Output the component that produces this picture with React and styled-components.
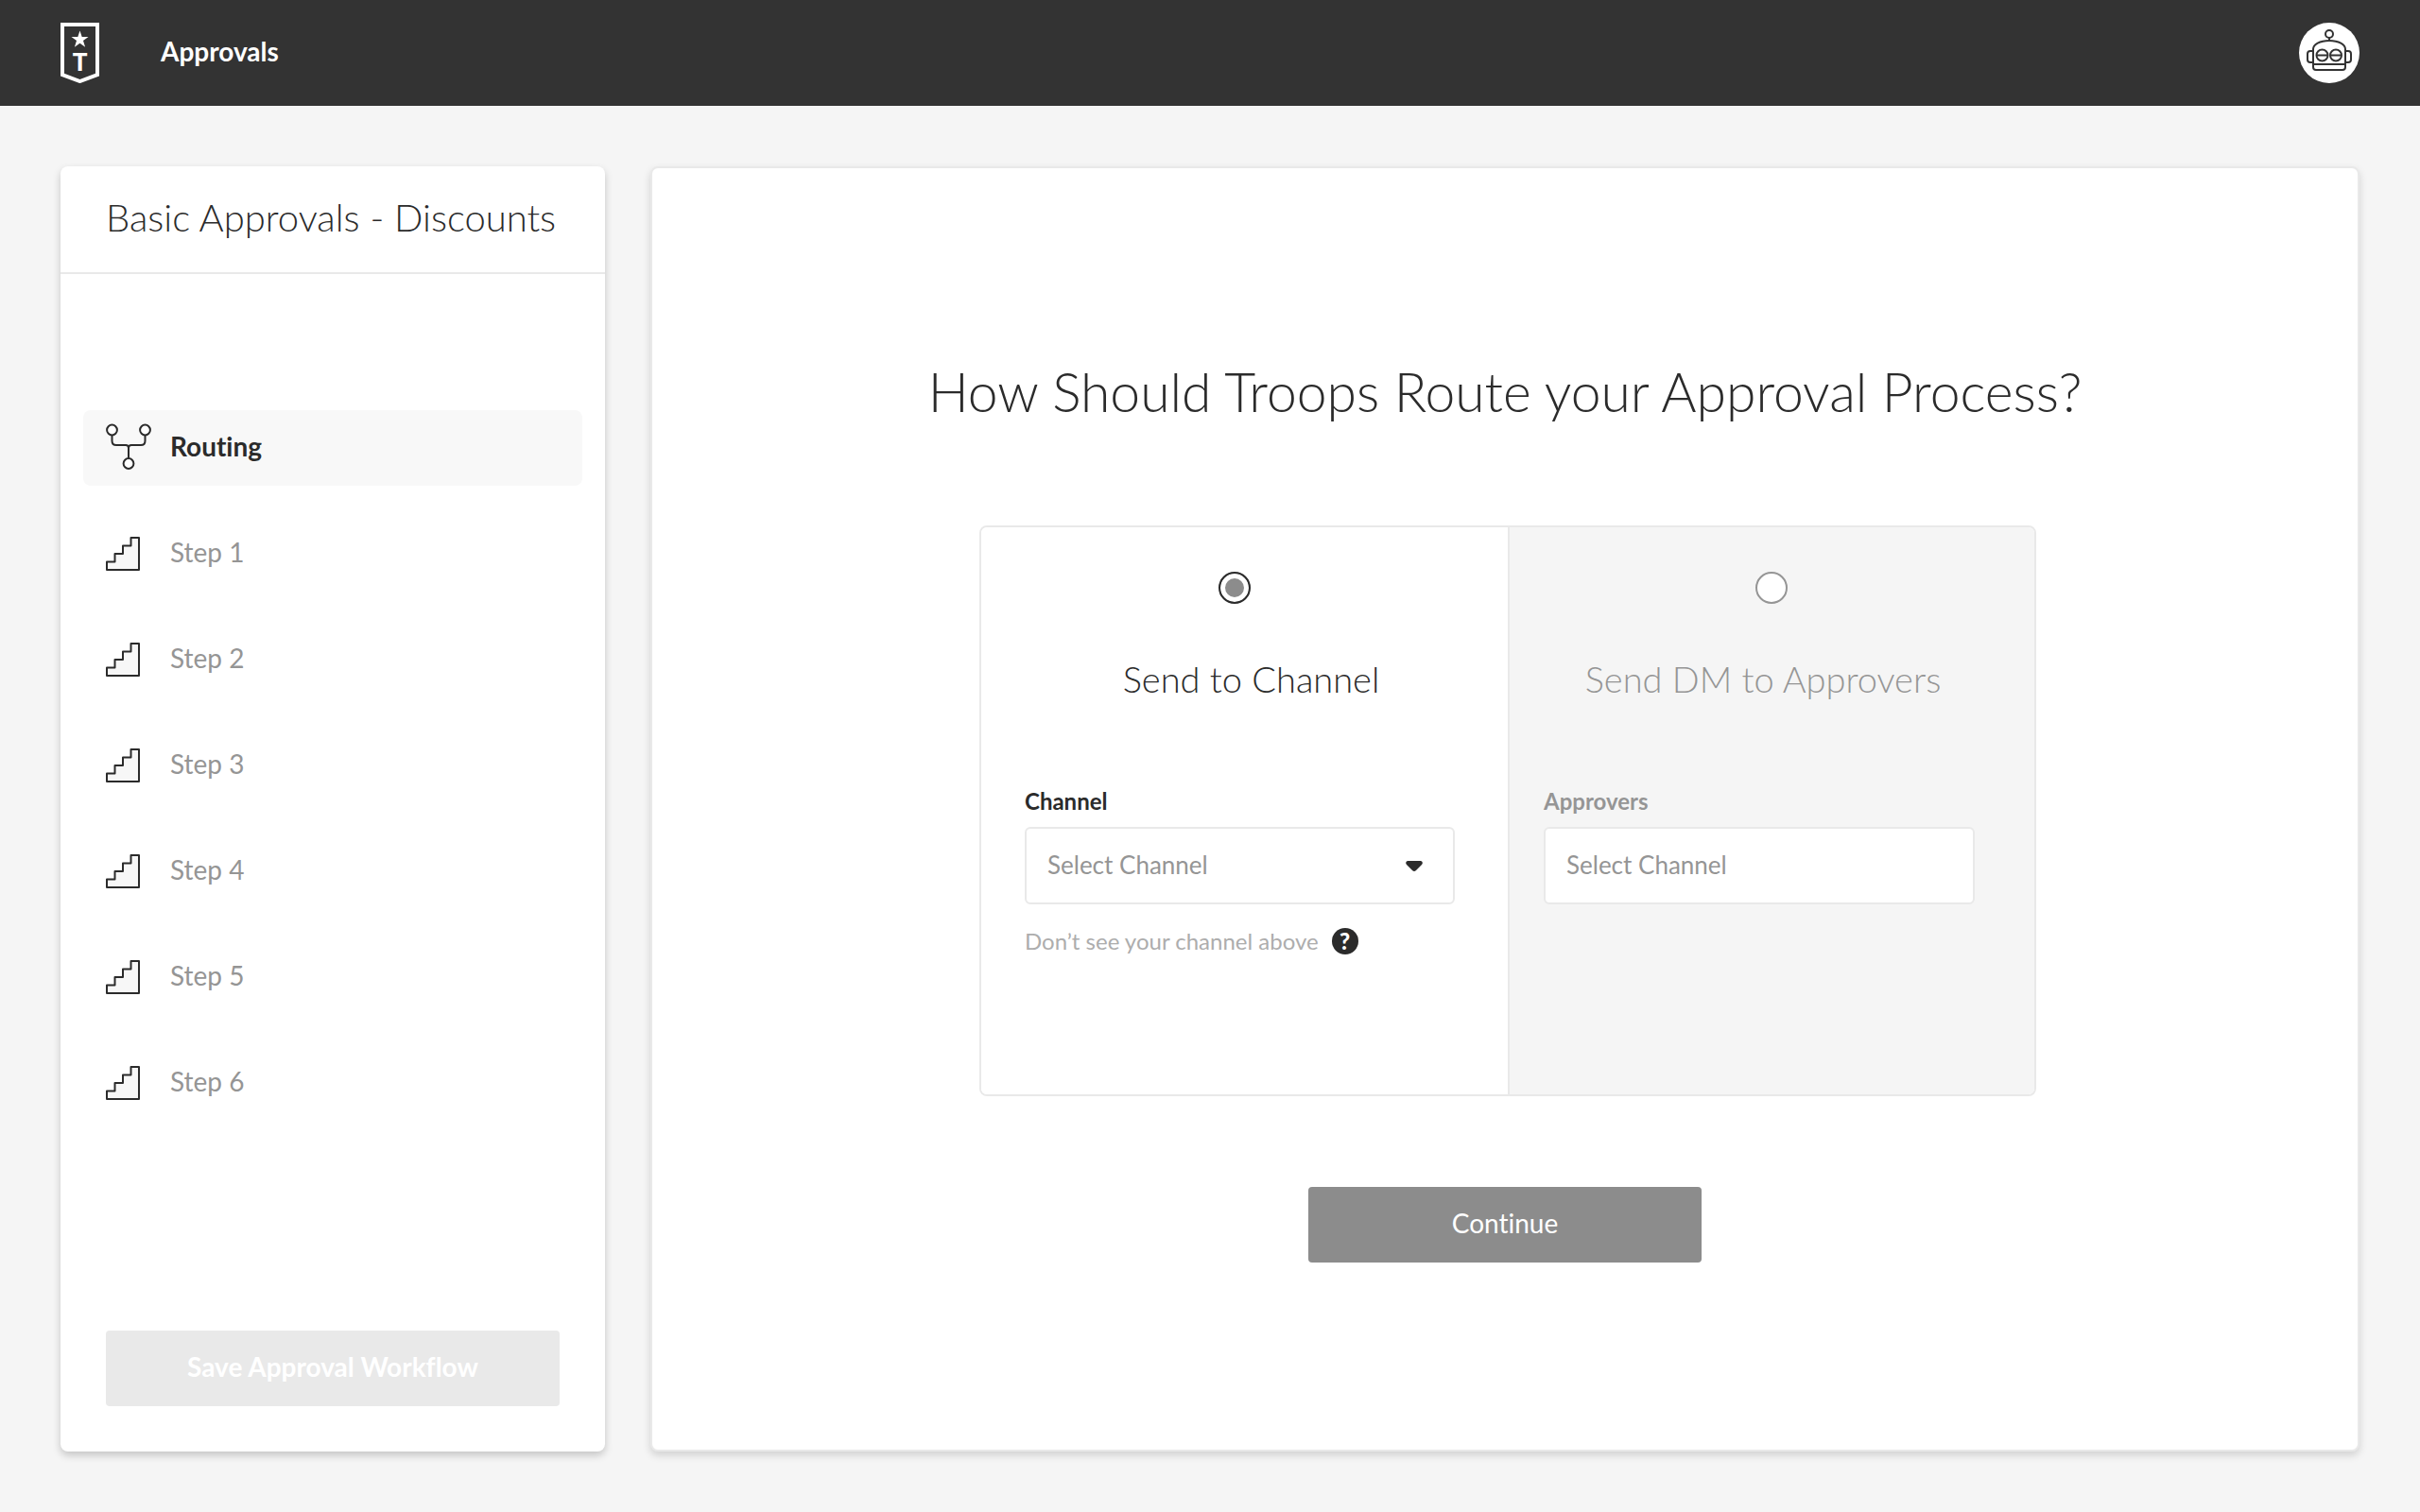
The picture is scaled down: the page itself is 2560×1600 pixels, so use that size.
import React, { useState } from "react";
import styled, { createGlobalStyle } from "styled-components";

const steps = ["Step 1", "Step 2", "Step 3", "Step 4", "Step 5", "Step 6"];

function LogoIcon() {
  return (
    <svg width="42" height="64" viewBox="0 0 42 64" fill="none">
      <path d="M2 2h37v53L20.500 62 2 55z" stroke="#fff" strokeWidth="4" />
      <path d="M20.500 8.500l2.200 6.500h6.800l-5.500 4.100 2.100 6.600-5.600-4-5.600 4 2.100-6.600-5.500-4.100h6.800z" fill="#fff" />
      <text x="20.500" y="51" textAnchor="middle" fontSize="26" fontWeight="900" fill="#fff">T</text>
    </svg>
  );
}

function RobotIcon() {
  return (
    <svg width="64" height="64" viewBox="0 0 64 64" fill="none" stroke="#333" strokeWidth="2">
      <circle cx="32" cy="12" r="4" />
      <path d="M32 16v4" />
      <path d="M15 47V28c0-5 7-9 17-9s17 4 17 9v19a3 3 0 0 1-3 3H18a3 3 0 0 1-3-3z" />
      <path d="M15 44h34" />
      <path d="M15 30h-3a3 3 0 0 0-3 3v6a3 3 0 0 0 3 3h3M49 30h3a3 3 0 0 1 3 3v6a3 3 0 0 1-3 3h-3" />
      <circle cx="24.500" cy="34.500" r="6" />
      <circle cx="39" cy="34.500" r="6" />
      <path d="M18.500 34.500h12M33 34.500h12" />
    </svg>
  );
}

function RoutingIcon() {
  return (
    <svg width="48" height="52" viewBox="0 0 48 52" fill="none" stroke="#2b2b2b" strokeWidth="2">
      <circle cx="6.500" cy="7" r="5.400" fill="#fff" />
      <circle cx="41.500" cy="7" r="5.400" fill="#fff" />
      <circle cx="24" cy="42.500" r="5.400" fill="#fff" />
      <path d="M6.500 12.500v6q0 4.500 4.500 4.500h10q3 0 3 3v11M41.500 12.500v6q0 4.500-4.500 4.500H27q-3 0-3 3" />
    </svg>
  );
}

function StepIcon() {
  return (
    <svg width="36" height="36" viewBox="0 0 36 36">
      <path d="M1 35v-8.500h8.500V18H18V9.500h8.500V1H35v34z" fill="#f7f7f7" stroke="#2b2b2b" strokeWidth="2" strokeLinejoin="round" />
    </svg>
  );
}

export default function App() {
  const [route, setRoute] = useState("channel");
  const [channel, setChannel] = useState("");
  const [approvers, setApprovers] = useState("");

  return (
    <Page>
      <GlobalStyle />
      <Header>
        <LogoIcon />
        <HeaderTitle>Approvals</HeaderTitle>
        <Avatar type="button" aria-label="Account">
          <RobotIcon />
        </Avatar>
      </Header>
      <Main>
        <Sidebar>
          <SidebarTitle>Basic Approvals - Discounts</SidebarTitle>
          <StepList>
            <StepItem type="button" $active>
              <IconBox><RoutingIcon /></IconBox>
              <StepLabel>Routing</StepLabel>
            </StepItem>
            {steps.map((step) => (
              <StepItem type="button" key={step}>
                <IconBox><StepIcon /></IconBox>
                <StepLabel>{step}</StepLabel>
              </StepItem>
            ))}
          </StepList>
          <SaveButton type="button">Save Approval Workflow</SaveButton>
        </Sidebar>

        <Panel>
          <Heading>How Should Troops Route your Approval Process?</Heading>
          <Options>
            <Option $padding="0 56px 0 46px">
              <RadioRow $shift="0 12px 0 0">
                <Radio
                  type="radio"
                  id="route-channel"
                  name="route"
                  checked={route === "channel"}
                  onChange={() => setRoute("channel")}
                />
              </RadioRow>
              <OptionTitle htmlFor="route-channel" $shift="0 0 0 24px">Send to Channel</OptionTitle>
              <FieldLabel htmlFor="channel">Channel</FieldLabel>
              <SelectWrap>
                <Select id="channel" value={channel} onChange={(e) => setChannel(e.target.value)}>
                  <option value="">Select Channel</option>
                </Select>
                <Caret width="18" height="12" viewBox="0 0 18 12">
                  <path d="M2 0h14q3 1 1 4l-6 6q-2 2-4 0L1 4q-2-3 1-4z" fill="#2b2b2b" />
                </Caret>
              </SelectWrap>
              <Help>
                Don’t see your channel above
                <HelpButton type="button" aria-label="Help">?</HelpButton>
              </Help>
            </Option>
            <Option $muted $padding="0 63px 0 36px">
              <RadioRow $shift="0 0 0 26px">
                <Radio
                  type="radio"
                  id="route-dm"
                  name="route"
                  checked={route === "dm"}
                  onChange={() => setRoute("dm")}
                />
              </RadioRow>
              <OptionTitle htmlFor="route-dm" $shift="0 0 0 8px">Send DM to Approvers</OptionTitle>
              <FieldLabel htmlFor="approvers">Approvers</FieldLabel>
              <Input
                type="text"
                id="approvers"
                placeholder="Select Channel"
                value={approvers}
                onChange={(e) => setApprovers(e.target.value)}
              />
            </Option>
          </Options>
          <ContinueButton type="button">Continue</ContinueButton>
        </Panel>
      </Main>
    </Page>
  );
}

const GlobalStyle = createGlobalStyle`
  * {
    box-sizing: border-box;
  }

  body {
    margin: 0;
    background: #f5f5f5;
    font-variant-ligatures: none;
  }

  body, button, input, select {
    font-family: Lato, "Open Sans", sans-serif;
    color: #2b2b2b;
  }

  button {
    padding: 0;
    border: none;
    font-variant-ligatures: none;
    cursor: pointer;
  }
`;

const Page = styled.div`
  min-height: 100vh;
  display: flex;
  flex-direction: column;
`;

const Header = styled.header`
  height: 112px;
  padding: 0 64px;
  display: flex;
  align-items: center;
  background: #333;
`;

const HeaderTitle = styled.h1`
  flex: 1;
  margin: 0 0 0 64px;
  padding-bottom: 4px;
  font-size: 28px;
  line-height: 36px;
  font-weight: 700;
  color: #fff;
`;

const Avatar = styled.button`
  width: 64px;
  height: 64px;
  border-radius: 50%;
  background: #fff;
`;

const Main = styled.main`
  flex: 1;
  display: flex;
  gap: 48px;
  padding: 64px;
`;

const Sidebar = styled.aside`
  width: 576px;
  display: flex;
  flex-direction: column;
  border-radius: 8px;
  background: #fff;
  box-shadow: 0 4px 8px rgba(0, 0, 0, 0.2);
`;

const SidebarTitle = styled.h2`
  height: 114px;
  margin: 0;
  padding: 0 48px;
  border-bottom: 2px solid #e9e9e9;
  font-size: 40px;
  line-height: 108px;
  font-weight: 300;
  white-space: nowrap;
`;

const StepList = styled.nav`
  flex: 1;
  display: flex;
  flex-direction: column;
  gap: 32px;
  padding: 144px 24px 0;
`;

const StepItem = styled.button`
  height: 80px;
  padding: 0 24px;
  display: flex;
  align-items: center;
  gap: 20px;
  border-radius: 8px;
  background: ${(props) => (props.$active ? "#f8f8f8" : "none")};
  color: ${(props) => (props.$active ? "#2b2b2b" : "#959595")};
  font-size: 28px;
  font-weight: ${(props) => (props.$active ? 700 : 400)};
`;

const IconBox = styled.span`
  width: 48px;
  display: flex;
`;

const StepLabel = styled.span`
  padding-bottom: 4px;
`;

const SaveButton = styled.button`
  height: 80px;
  margin: 48px;
  padding-bottom: 4px;
  border-radius: 4px;
  background: #e9e9e9;
  color: #fff;
  font-size: 28px;
  font-weight: 700;
`;

const Panel = styled.section`
  flex: 1;
  display: flex;
  flex-direction: column;
  border: 2px solid #e9e9e9;
  border-radius: 8px;
  background: #fff;
  box-shadow: 0 4px 8px rgba(0, 0, 0, 0.15);
`;

const Heading = styled.h2`
  margin: 200px 0 106px;
  text-align: center;
  font-size: 57px;
  line-height: 72px;
  font-weight: 300;
`;

const Options = styled.div`
  min-height: 604px;
  margin: 0 340px 0 346px;
  display: grid;
  grid-template-columns: 1fr 1fr;
  border: 2px solid #e9e9e9;
  border-radius: 8px;
  overflow: hidden;
`;

const Option = styled.div`
  display: flex;
  flex-direction: column;
  padding: ${(props) => props.$padding};
  background: ${(props) => (props.$muted ? "#f5f5f5" : "#fff")};
  color: ${(props) => (props.$muted ? "#959595" : "#2b2b2b")};

  & + & {
    border-left: 2px solid #e9e9e9;
  }
`;

const RadioRow = styled.div`
  display: flex;
  justify-content: center;
  margin-top: 47px;
  padding: ${(props) => props.$shift};
`;

const Radio = styled.input`
  appearance: none;
  width: 34px;
  height: 34px;
  margin: 0;
  border: 2px solid #959595;
  border-radius: 50%;
  background: #fff;

  &:checked {
    border-color: #2b2b2b;
    background: #8c8c8c;
    box-shadow: inset 0 0 0 5px #fff;
  }
`;

const OptionTitle = styled.label`
  margin: 55px 0 90px;
  padding: ${(props) => props.$shift};
  text-align: center;
  font-size: 38px;
  line-height: 48px;
  font-weight: 300;
`;

const FieldLabel = styled.label`
  margin-bottom: 11px;
  font-size: 24px;
  line-height: 32px;
  font-weight: 700;
`;

const SelectWrap = styled.div`
  position: relative;
`;

const Select = styled.select`
  appearance: none;
  width: 100%;
  height: 82px;
  padding: 0 22px 2px;
  border: 2px solid #e9e9e9;
  border-radius: 6px;
  background: #fff;
  color: #959595;
  font-size: 26px;
`;

const Caret = styled.svg`
  position: absolute;
  top: 36px;
  right: 34px;
  pointer-events: none;
`;

const Input = styled.input`
  width: 100%;
  height: 82px;
  padding: 0 22px 2px;
  border: 2px solid #e9e9e9;
  border-radius: 6px;
  background: #fff;
  font-size: 26px;

  &::placeholder {
    color: #959595;
  }
`;

const Help = styled.div`
  display: flex;
  align-items: center;
  gap: 14px;
  margin-top: 23px;
  color: #adadad;
  font-size: 24px;
  line-height: 32px;
`;

const HelpButton = styled.button`
  width: 28px;
  height: 28px;
  border-radius: 50%;
  background: #2b2b2b;
  color: #fff;
  font-size: 24px;
  line-height: 28px;
  font-weight: 900;
`;

const ContinueButton = styled.button`
  width: 416px;
  height: 80px;
  margin-top: 96px;
  padding-bottom: 4px;
  align-self: center;
  border-radius: 4px;
  background: #8c8c8c;
  color: #fff;
  font-size: 28px;
`;
